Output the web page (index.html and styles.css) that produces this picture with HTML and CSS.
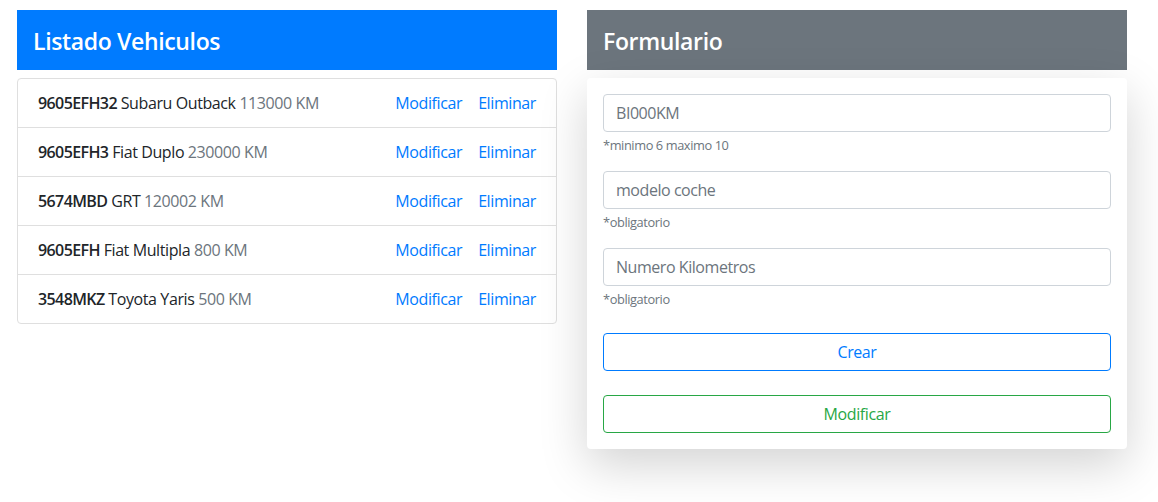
FILE: index.html
```html
<!DOCTYPE html>
<html lang="es">
<head>
<meta charset="utf-8">
<title>Vehiculos</title>
<link rel="stylesheet" href="styles.css">
</head>
<body>
<div class="page">
  <section class="col">
    <header class="panel-head head-primary"><h4>Listado Vehiculos</h4></header>
    <ul class="list">
      <li class="item"><span class="desc"><b class="plate">9605EFH32</b> Subaru Outback <span class="km">113000 KM</span></span><span class="actions"><a href="#">Modificar</a><a href="#">Eliminar</a></span></li>
      <li class="item"><span class="desc"><b class="plate">9605EFH3</b> Fiat Duplo <span class="km">230000 KM</span></span><span class="actions"><a href="#">Modificar</a><a href="#">Eliminar</a></span></li>
      <li class="item"><span class="desc"><b class="plate">5674MBD</b> GRT <span class="km">120002 KM</span></span><span class="actions"><a href="#">Modificar</a><a href="#">Eliminar</a></span></li>
      <li class="item"><span class="desc"><b class="plate">9605EFH</b> Fiat Multipla <span class="km">800 KM</span></span><span class="actions"><a href="#">Modificar</a><a href="#">Eliminar</a></span></li>
      <li class="item"><span class="desc"><b class="plate">3548MKZ</b> Toyota Yaris <span class="km">500 KM</span></span><span class="actions"><a href="#">Modificar</a><a href="#">Eliminar</a></span></li>
    </ul>
  </section>
  <section class="col">
    <header class="panel-head head-secondary"><h4>Formulario</h4></header>
    <form class="card">
      <div class="group">
        <input class="field" type="text" placeholder="BI000KM">
        <small class="hint">*minimo 6 maximo 10</small>
      </div>
      <div class="group">
        <input class="field" type="text" placeholder="modelo coche">
        <small class="hint">*obligatorio</small>
      </div>
      <div class="group">
        <input class="field" type="text" placeholder="Numero Kilometros">
        <small class="hint">*obligatorio</small>
      </div>
      <button type="button" class="btn btn-blue">Crear</button>
      <button type="button" class="btn btn-green">Modificar</button>
    </form>
  </section>
</div>
</body>
</html>
```
FILE: styles.css
```css
* { box-sizing: border-box; }
html, body { height: 100%; }
body {
  margin: 0;
  font-family: "Open Sans", "Noto Sans", sans-serif;
  font-size: 16px;
  line-height: 24px;
  letter-spacing: -0.4px;
  color: #212529;
  background: #fff;
}
.page {
  display: flex;
  gap: 30px;
  padding: 10px 17px;
  min-height: 100%;
}
.col { width: 540px; flex: none; }
.panel-head {
  height: 60px;
  padding: 2px 16px 0;
  display: flex;
  align-items: center;
  color: #fff;
}
.panel-head h4 {
  margin: 0;
  font-size: 23px;
  font-weight: 600;
  line-height: 28px;
  letter-spacing: -0.35px;
}
.head-primary { background: #007bff; }
.head-secondary { background: #6c757d; }
.list {
  list-style: none;
  margin: 8px 0 0;
  padding: 0;
  border: 1px solid #dfdfdf;
  border-radius: 4px;
}
.item {
  display: flex;
  justify-content: space-between;
  padding: 12px 20px;
  border-top: 1px solid #dfdfdf;
}
.item:first-child { border-top: 0; }
.plate { font-weight: 600; letter-spacing: -0.6px; }
.km { color: #6c757d; }
.actions { display: flex; gap: 16px; }
.actions a { color: #007bff; text-decoration: none; }
.card {
  margin-top: 8px;
  padding: 16px;
  background: #fff;
  border-radius: 4px;
  box-shadow: 0 16px 48px rgba(0,0,0,0.175);
}
.group { margin-bottom: 16px; }
.field {
  display: block;
  width: 100%;
  height: 38px;
  padding: 6px 12px;
  font: inherit;
  letter-spacing: -0.45px;
  color: #495057;
  border: 1px solid #ced4da;
  border-radius: 4px;
  background: #fff;
}
.field::placeholder { color: #6c757d; opacity: 1; }
.hint {
  display: block;
  margin-top: 4px;
  font-size: 12.8px;
  line-height: 19px;
  letter-spacing: -0.4px;
  color: #6c757d;
}
.btn {
  display: block;
  width: 100%;
  height: 38px;
  font: inherit;
  letter-spacing: -0.4px;
  background: #fff;
  border-radius: 4px;
  cursor: pointer;
}
.btn-blue { margin-top: 24px; border: 1px solid #007bff; color: #007bff; }
.btn-green { margin-top: 24px; border: 1px solid #28a745; color: #28a745; }
```
